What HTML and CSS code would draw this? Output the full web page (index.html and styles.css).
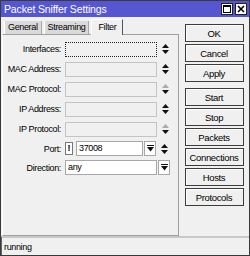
FILE: index.html
```html
<!DOCTYPE html>
<html lang="en">
<head>
    <meta charset="UTF-8" />
    <title>Packet Sniffer Settings</title>
    <link rel="stylesheet" href="styles.css">
</head>
<body>
    <div class="window">
        <div class="titlebar">
            <span class="title">Packet Sniffer Settings</span>
            <span class="tb-btn">
                <svg width="8" height="8" viewBox="0 0 8 8"><rect x="0.5" y="0.5" width="7" height="7" fill="none" stroke="#000" stroke-width="1"/><line x1="0" y1="1.5" x2="8" y2="1.5" stroke="#000"/></svg>
            </span>
            <span class="tb-btn">
                <svg width="8" height="8" viewBox="0 0 8 8"><path d="M1 1 L7 7 M7 1 L1 7" stroke="#000" stroke-width="1.6"/></svg>
            </span>
        </div>

        <div class="content">
            <div class="main">
                <div class="tabs">
                    <div class="tab">General</div>
                    <div class="tab">Streaming</div>
                    <div class="tab active">Filter</div>
                </div>
                <div class="panel">
                    <div class="row">
                        <label>Interfaces:</label>
                        <div class="field focus"></div>
                        <span class="spin"><svg width="7" height="10" viewBox="0 0 7 10"><path d="M3.5 0 L7 4 L0 4 Z M0 6 L7 6 L3.5 10 Z" fill="#111"/></svg></span>
                    </div>
                    <div class="row">
                        <label>MAC Address:</label>
                        <div class="field"></div>
                        <span class="spin"><svg width="7" height="10" viewBox="0 0 7 10"><path d="M3.5 0 L7 4 L0 4 Z M0 6 L7 6 L3.5 10 Z" fill="#111"/></svg></span>
                    </div>
                    <div class="row">
                        <label>MAC Protocol:</label>
                        <div class="field"></div>
                        <span class="spin"><svg width="7" height="10" viewBox="0 0 7 10"><path d="M3.5 0 L7 4 L0 4 Z" fill="#aaa"/><path d="M0 6 L7 6 L3.5 10 Z" fill="#111"/></svg></span>
                    </div>
                    <div class="row">
                        <label>IP Address:</label>
                        <div class="field"></div>
                        <span class="spin"><svg width="7" height="10" viewBox="0 0 7 10"><path d="M3.5 0 L7 4 L0 4 Z M0 6 L7 6 L3.5 10 Z" fill="#111"/></svg></span>
                    </div>
                    <div class="row">
                        <label>IP Protocol:</label>
                        <div class="field"></div>
                        <span class="spin"><svg width="7" height="10" viewBox="0 0 7 10"><path d="M3.5 0 L7 4 L0 4 Z" fill="#aaa"/><path d="M0 6 L7 6 L3.5 10 Z" fill="#111"/></svg></span>
                    </div>
                    <div class="row short">
                        <label>Port:</label>
                        <span class="check">!</span>
                        <div class="field white port">37008</div>
                        <span class="drop"><svg width="7" height="7" viewBox="0 0 7 7"><path d="M0 0.5 H7" stroke="#111"/><path d="M0 2 L7 2 L3.5 6.5 Z" fill="#111"/></svg></span>
                        <span class="spin"><svg width="7" height="10" viewBox="0 0 7 10"><path d="M3.5 0 L7 4 L0 4 Z M0 6 L7 6 L3.5 10 Z" fill="#111"/></svg></span>
                    </div>
                    <div class="row short">
                        <label>Direction:</label>
                        <div class="field white">any</div>
                        <span class="drop"><svg width="7" height="7" viewBox="0 0 7 7"><path d="M0 0.5 H7" stroke="#111"/><path d="M0 2 L7 2 L3.5 6.5 Z" fill="#111"/></svg></span>
                    </div>
                </div>
            </div>

            <div class="actions">
                <button>OK</button>
                <button>Cancel</button>
                <button>Apply</button>
                <button class="spaced">Start</button>
                <button>Stop</button>
                <button>Packets</button>
                <button>Connections</button>
                <button>Hosts</button>
                <button>Protocols</button>
            </div>
        </div>

        <div class="status">running</div>
    </div>
</body>
</html>
```

FILE: styles.css
```css
body {
    margin: 0;
    font-family: "Liberation Sans", Arial, sans-serif;
    font-size: 9px;
    letter-spacing: -0.35px;
    color: #000;
}

.window {
    width: 248px;
    height: 254px;
    border: 1px solid #3a3a3a;
    background-color: #f0f0f0;
    display: flex;
    flex-direction: column;
}

.titlebar {
    height: 16px;
    background-color: #5656d0;
    display: flex;
    align-items: center;
    padding: 0 2px 0 3px;
    gap: 2px;
}

.title {
    flex: 1;
    color: #fff;
    font-size: 10.5px;
    letter-spacing: -0.15px;
}

.tb-btn {
    width: 10px;
    height: 10px;
    background-color: #fff;
    border: 1px solid #222;
    display: flex;
    align-items: center;
    justify-content: center;
}

.content {
    flex: 1;
    display: flex;
}

.main {
    width: 177px;
    display: flex;
    flex-direction: column;
    padding-left: 1px;
}

.tabs {
    display: flex;
    align-items: flex-end;
    height: 17px;
    padding-left: 2px;
    gap: 2px;
}

.tab {
    height: 13px;
    line-height: 13px;
    padding: 0 3px;
    background-color: #dadada;
    border-left: 1px solid #fff;
    border-right: 1px solid #a8a8a8;
}

.tab.active {
    height: 15px;
    line-height: 14px;
    background-color: #f0f0f0;
    border-top: 1px solid #fff;
    border-right: 1px solid #555;
    padding: 0 6px;
    margin-bottom: -1px;
    position: relative;
}

.panel {
    flex: 1;
    border: 1px solid #a0a0a0;
    border-left-color: #fff;
    padding-top: 4px;
}

.row {
    height: 20px;
    display: flex;
    align-items: center;
    white-space: nowrap;
}

.row.short {
    height: 19px;
}

.row label {
    width: 58px;
    padding-right: 4px;
    text-align: right;
}

.field {
    width: 88px;
    height: 13px;
    line-height: 13px;
    border: 1px solid #c4c4c4;
    background-color: #f0f0f0;
    padding-left: 2px;
}

.field.focus {
    border: 1px dotted #222;
}

.field.white {
    background-color: #fff;
    border-color: #a8a8a8;
}

.field.port {
    width: 63px;
    margin-left: 3px;
}

.check {
    width: 6px;
    height: 11px;
    line-height: 11px;
    border: 1px solid #777;
    background-color: #fff;
    text-align: center;
    font-weight: bold;
    letter-spacing: 0;
}

.drop {
    width: 10px;
    height: 13px;
    border: 1px solid #a8a8a8;
    background-color: #fff;
    display: flex;
    align-items: center;
    justify-content: center;
    margin-left: 1px;
}

.spin {
    width: 12px;
    display: flex;
    justify-content: center;
    margin-left: 2px;
}

.actions {
    flex: 1;
    display: flex;
    flex-direction: column;
    align-items: center;
    padding-top: 7px;
    gap: 2px;
}

button {
    width: 59px;
    height: 18px;
    padding: 0;
    font-family: inherit;
    font-size: 9.5px;
    letter-spacing: -0.35px;
    color: #000;
    background-color: #f0f0f0;
    border: 1px solid #3c3c3c;
    box-shadow: inset 1px 1px #fff;
}

button.spaced {
    margin-top: 4px;
}

.status {
    height: 17px;
    line-height: 18px;
    border-top: 2px solid #c8c8c8;
    border-left: 1px solid #666;
    padding-left: 2px;
}
```
